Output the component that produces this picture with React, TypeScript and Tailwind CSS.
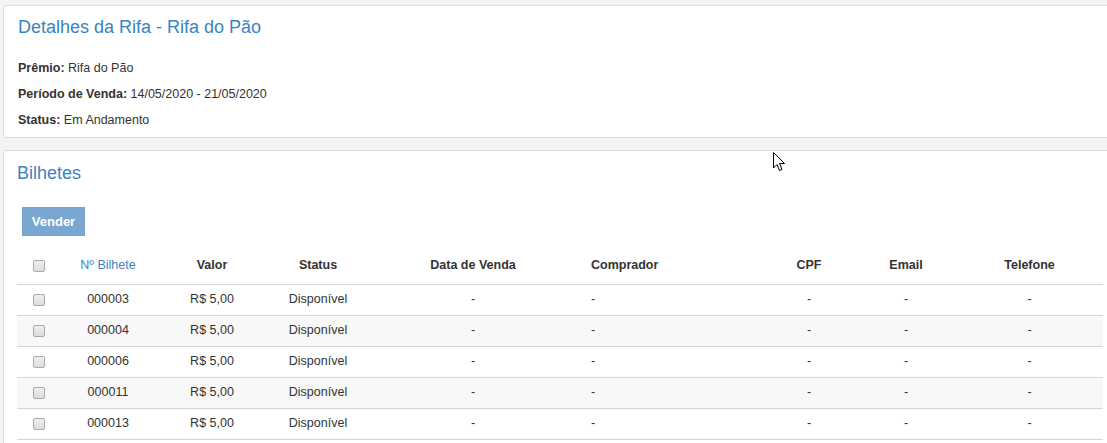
import React from "react";

const rows = [
  { n: "000003", striped: false },
  { n: "000004", striped: true },
  { n: "000006", striped: false },
  { n: "000011", striped: true },
  { n: "000013", striped: false },
];

function Check() {
  return (
    <span className="inline-block w-[12px] h-[12px] rounded-[2px] border border-[#a9a9a9] bg-gradient-to-b from-[#f0f0f0] to-[#dcdcdc] align-middle" />
  );
}

export default function App() {
  return (
    <div
      className="relative w-[1107px] h-[443px] overflow-hidden bg-[#f4f4f4] text-[#333] text-[12.5px]"
      style={{ fontFamily: '"Liberation Sans", Arial, sans-serif' }}
    >
      <div className="pl-[3px] pt-[5px] w-[1130px]">
        <div className="bg-white border border-[#dcdcdc] rounded-[3px] w-[1116px] h-[133px] px-[14px] pt-[9px]">
          <h2 className="text-[18px] leading-[24px] text-[#3a83c3]">Detalhes da Rifa - Rifa do Pão</h2>
          <div className="mt-[21px] flex flex-col gap-[9px] leading-[17px]">
            <div>
              <b>Prêmio:</b> Rifa do Pão
            </div>
            <div>
              <b>Período de Venda:</b> 14/05/2020 - 21/05/2020
            </div>
            <div>
              <b>Status:</b> Em Andamento
            </div>
          </div>
        </div>

        <div className="mt-[12px] bg-white border border-[#dcdcdc] rounded-[3px] w-[1116px] h-[320px] px-[13px] pt-[10px]">
          <h2 className="text-[18px] leading-[24px] text-[#3a83c3]">Bilhetes</h2>
          <button className="mt-[22px] ml-[5px] w-[63px] h-[29px] bg-[#7aa7d2] border border-[#79a3cc] text-white font-bold text-[13px] leading-none">
            Vender
          </button>
          <table className="mt-[9px] table-fixed border-collapse w-[1086px]">
            <colgroup>
              <col className="w-[44px]" />
              <col className="w-[94px]" />
              <col className="w-[114px]" />
              <col className="w-[98px]" />
              <col className="w-[212px]" />
              <col className="w-[183px]" />
              <col className="w-[94px]" />
              <col className="w-[100px]" />
              <col className="w-[147px]" />
            </colgroup>
            <thead>
              <tr className="h-[39px] border-b border-[#d4d4d4] font-bold">
                <th className="text-center pt-[2px]"><Check /></th>
                <th className="text-center pt-[2px] font-normal text-[#3a83c3]">Nº Bilhete</th>
                <th className="text-center pt-[2px]">Valor</th>
                <th className="text-center pt-[2px]">Status</th>
                <th className="text-center pt-[2px]">Data de Venda</th>
                <th className="text-left pt-[2px] pl-[12px]">Comprador</th>
                <th className="text-center pt-[2px]">CPF</th>
                <th className="text-center pt-[2px]">Email</th>
                <th className="text-center pt-[2px]">Telefone</th>
              </tr>
            </thead>
            <tbody>
              {rows.map((r) => (
                <tr
                  key={r.n}
                  className={`h-[31px] border-b border-[#d4d4d4] ${r.striped ? "bg-[#f8f8f8]" : "bg-white"}`}
                >
                  <td className="text-center"><Check /></td>
                  <td className="text-center">{r.n}</td>
                  <td className="text-center">R$ 5,00</td>
                  <td className="text-center">Disponível</td>
                  <td className="text-center">-</td>
                  <td className="text-left pl-[12px]">-</td>
                  <td className="text-center">-</td>
                  <td className="text-center">-</td>
                  <td className="text-center">-</td>
                </tr>
              ))}
            </tbody>
          </table>
        </div>
      </div>

      <svg className="absolute left-[773px] top-[152px]" width="13" height="20" viewBox="0 0 13 20">
        <path d="M0.5 0.5 L0.5 16 L4 12.5 L6.5 18.5 L9 17.5 L6.5 11.5 L11.5 11.5 Z" fill="#fff" stroke="#000" strokeWidth="1" strokeLinejoin="miter" />
      </svg>
    </div>
  );
}
